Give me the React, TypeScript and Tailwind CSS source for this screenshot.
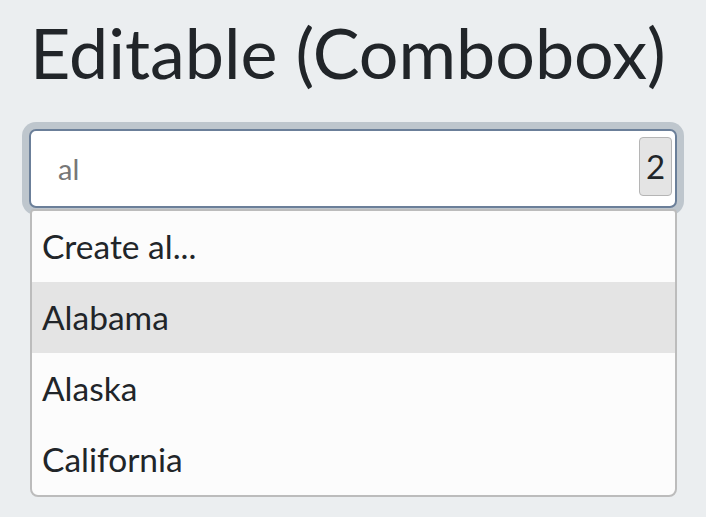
import React from "react";

export default function App() {
  const items = ["Create al...", "Alabama", "Alaska", "California"];
  return (
    <div
      className="min-h-[517px] w-[706px] bg-[#ebeef0] px-[29px] pt-[10px] text-[#212529]"
      style={{ fontFamily: "Lato, 'Noto Sans', sans-serif" }}
    >
      <h1 className="text-[70px] leading-[84px] font-normal pl-[1px]">Editable (Combobox)</h1>
      <div className="mt-[35px] w-[648px]">
        <div className="flex h-[79px] items-start rounded-[7px] border-2 border-[#6b7f99] bg-white shadow-[0_0_0_7px_#bec6cd] pl-[27px] pr-[3px]">
          <input
            className="h-full flex-1 bg-transparent text-[29px] text-[#212529] placeholder:text-[#777] outline-none"
            placeholder="al"
            style={{ fontFamily: "Lato, 'Noto Sans', sans-serif" }}
          />
          <div className="mt-[6px] flex h-[59px] w-[33px] items-center justify-center rounded-[4px] border border-[#b5b5b5] bg-[#e4e4e4] text-[33px]">
            2
          </div>
        </div>
        <div className="mt-[1px] ml-[1px] w-[647px] overflow-hidden rounded-b-[8px] rounded-t-[4px] border-2 border-[#bcbcbc] bg-[#fcfcfc]">
          {items.map((it, i) => (
            <div
              key={it}
              className={
                "flex h-[71px] items-center pl-[10px] text-[33.5px] " +
                (i === 1 ? "bg-[#e4e4e4]" : "")
              }
            >
              {it}
            </div>
          ))}
        </div>
      </div>
    </div>
  );
}
